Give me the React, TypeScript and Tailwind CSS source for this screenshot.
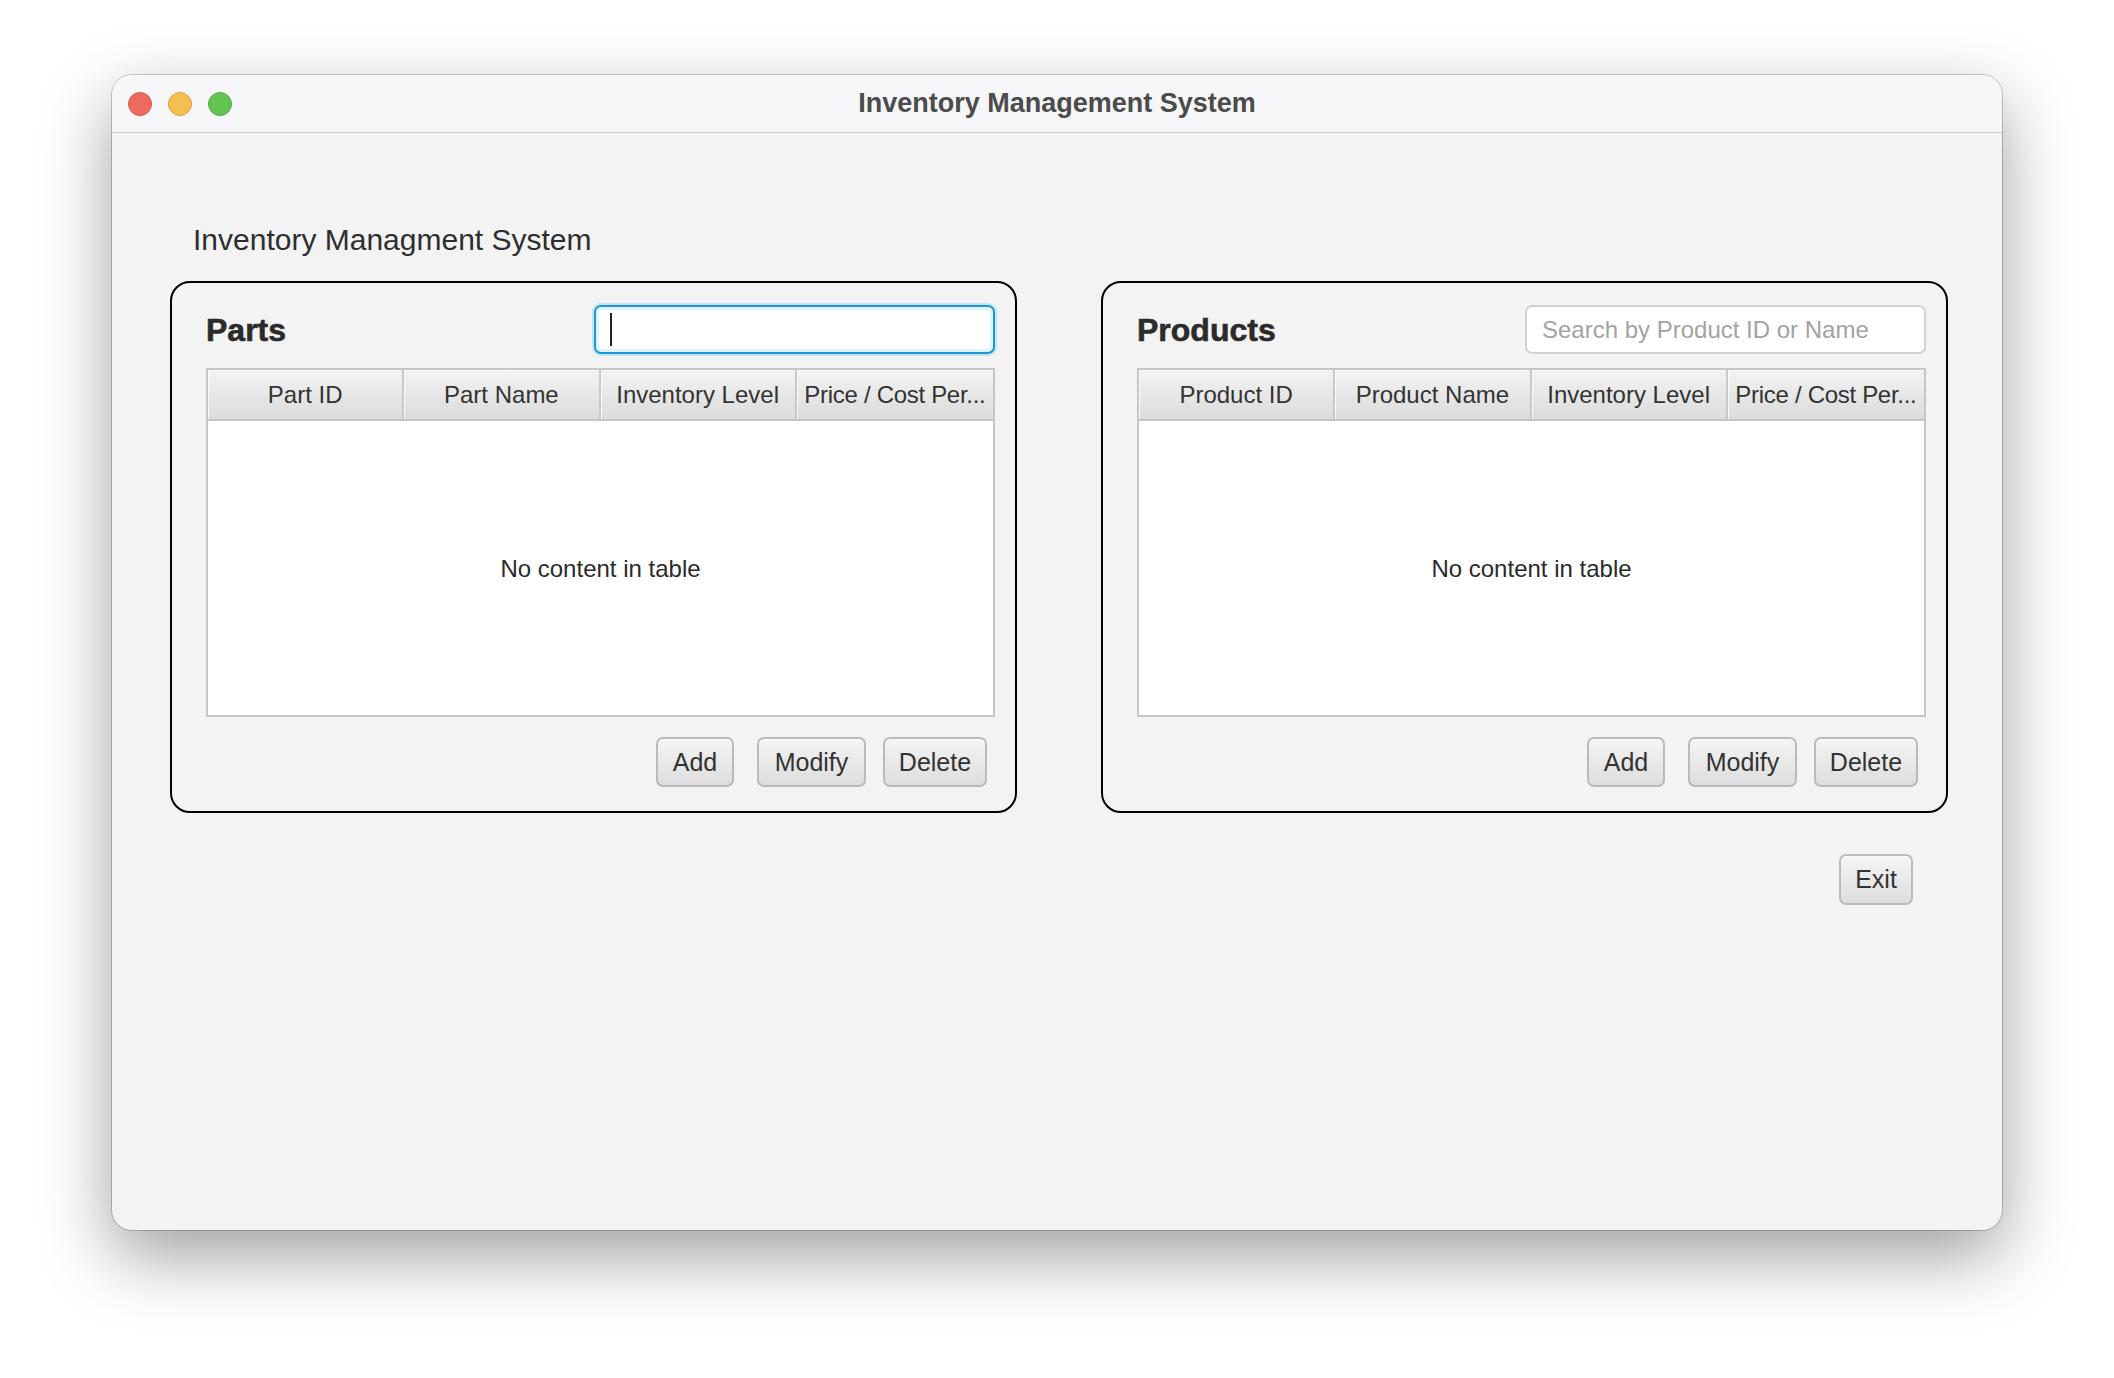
import React from "react";

const columnsParts = ["Part ID", "Part Name", "Inventory Level", "Price / Cost Per..."];
const columnsProducts = ["Product ID", "Product Name", "Inventory Level", "Price / Cost Per..."];

const Btn = ({ label, w }: { label: string; w: string }) => (
  <button
    type="button"
    className={`${w} h-[50px] rounded-[7px] border-2 border-[#bababa] bg-linear-to-b from-[#f5f5f5] to-[#dddddd] text-[25px] leading-none text-[#333] shadow-[inset_0_1px_0_#fbfbfb]`}
  >
    {label}
  </button>
);

const Panel = ({ title, columns, focused }: any) => {
  return (
    <div className="w-[847px] h-[532px] rounded-[20px] border-2 border-black pl-[34px] pr-[20px] pt-[22px] pb-[24px] flex flex-col">
      <div className="flex items-center justify-between h-[49px]">
        <h2 className="text-[32px] leading-none font-bold text-[#2b2b2b] [-webkit-text-stroke:0.6px_#2b2b2b]">{title}</h2>
        {focused ? (
          <div className="w-[401px] h-[49px] rounded-[7px] border-2 border-[#1a98d6] bg-white flex items-center pl-[14px] shadow-[0_0_0_2px_#c4e5f6,inset_0_0_0_3px_#e1f2fb]">
            <span className="w-[2px] h-[33px] bg-[#222]"></span>
          </div>
        ) : (
          <div className="w-[401px] h-[49px] rounded-[7px] border-2 border-[#d2d2d2] bg-white flex items-center pl-[15px] text-[24px] text-[#a3a3a3]">
            Search by Product ID or Name
          </div>
        )}
      </div>

      <div className="mt-[14px] h-[349px] border-2 border-[#c6c6c6] bg-white flex flex-col">
        <div className="grid grid-cols-4 h-[51px] border-b-2 border-[#c6c6c6]">
          {columns.map((c: string, i: number) => (
            <div
              key={c}
              className={`flex items-center justify-center pt-[1px] bg-linear-to-b from-[#f3f3f3] to-[#dcdcdc] shadow-[inset_1px_1px_0_#fafafa] text-[24px] text-[#333] whitespace-nowrap overflow-hidden ${
                i < 3 ? "border-r-2 border-[#c9c9c9]" : ""
              } ${i === 3 ? "tracking-[-0.3px]" : ""}`}
            >
              {c}
            </div>
          ))}
        </div>
        <div className="flex-1 flex items-center justify-center pt-[2px] text-[24px] text-[#2b2b2b]">
          No content in table
        </div>
      </div>

      <div className="mt-[20px] flex justify-end pr-[8px]">
        <Btn label="Add" w="w-[78px]" />
        <div className="w-[23px]"></div>
        <Btn label="Modify" w="w-[109px]" />
        <div className="w-[17px]"></div>
        <Btn label="Delete" w="w-[104px]" />
      </div>
    </div>
  );
};

const App = () => {
  return (
    <div className="w-[2114px] h-[1378px] bg-white pt-[75px] pl-[112px] font-['Liberation_Sans',Arial,sans-serif]">
      <div className="w-[1890px] h-[1155px] rounded-[20px] overflow-hidden bg-[#f3f3f3] flex flex-col shadow-[0_26px_70px_rgba(0,0,0,0.38),0_0_0_1px_rgba(0,0,0,0.2)]">
        {/* title bar */}
        <div className="h-[58px] border-b border-[#d0d0d0] bg-[#f6f5f7] grid grid-cols-[1fr_auto_1fr] items-center">
          <div className="flex items-center gap-[16px] pl-[16px]">
            <span className="w-[24px] h-[24px] rounded-full bg-[#ee6a5f] border border-[#d5584d]"></span>
            <span className="w-[24px] h-[24px] rounded-full bg-[#f5bf4f] border border-[#d8a444]"></span>
            <span className="w-[24px] h-[24px] rounded-full bg-[#62c554] border border-[#53a848]"></span>
          </div>
          <div className="text-[27px] font-bold text-[#4b4b4b] leading-none">Inventory Management System</div>
          <div></div>
        </div>

        {/* content */}
        <div className="flex-1 pl-[58px] pt-[92px]">
          <h1 className="ml-[23px] text-[30px] leading-[30px] text-[#2e2e2e]">Inventory Managment System</h1>
          <div className="mt-[26px] flex gap-[84px]">
            <Panel title="Parts" columns={columnsParts} focused />
            <Panel title="Products" columns={columnsProducts} />
          </div>
          <div className="w-[1778px] mt-[41px] flex justify-end pr-[35px]">
            <button
              type="button"
              className="w-[74px] h-[51px] rounded-[7px] border-2 border-[#bababa] bg-linear-to-b from-[#f5f5f5] to-[#dddddd] text-[25px] leading-none text-[#333] shadow-[inset_0_1px_0_#fbfbfb]"
            >
              Exit
            </button>
          </div>
        </div>
      </div>
    </div>
  );
};

export default App;
